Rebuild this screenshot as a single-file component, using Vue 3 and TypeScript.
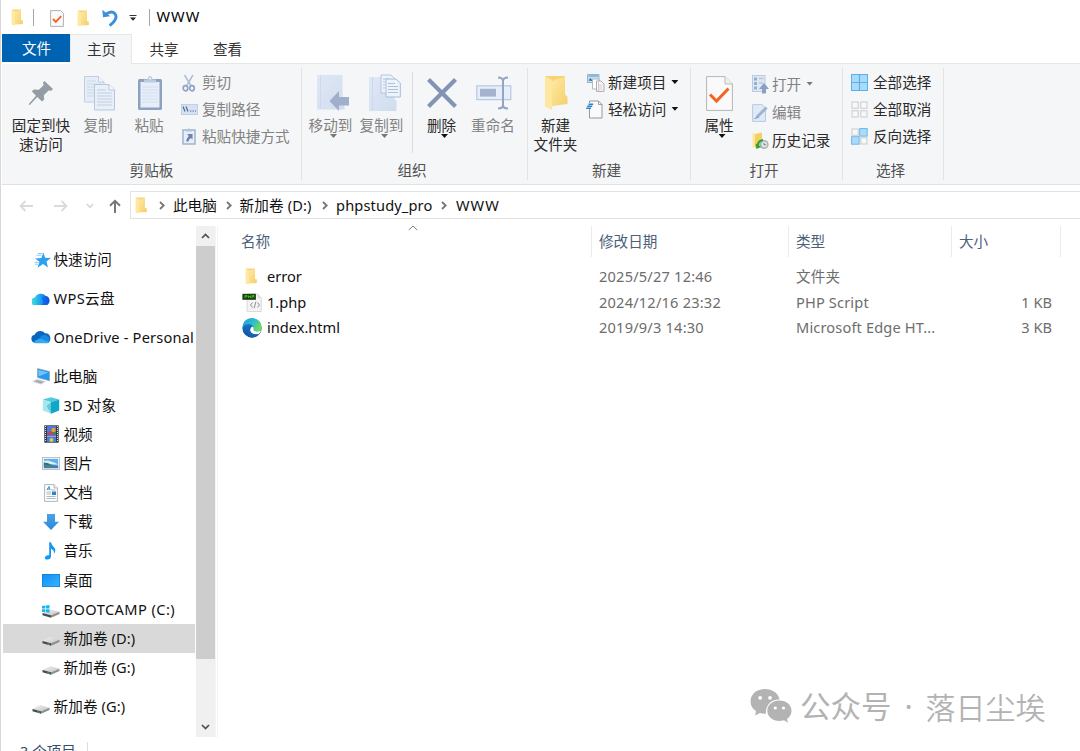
<script setup lang="ts">
interface SmallItem { icon: string; text: string; off?: boolean; arrow?: boolean }
interface NavItem { icon: string; text: string; sub?: boolean; gap?: boolean; active?: boolean }
interface FileRow { icon: string; name: string; date: string; type: string; size: string }

const clipItems: SmallItem[] = [
  { icon: 'cut', text: '剪切', off: true },
  { icon: 'path', text: '复制路径', off: true },
  { icon: 'shortcut', text: '粘贴快捷方式', off: true },
]
const newItems: SmallItem[] = [
  { icon: 'newitem', text: '新建项目', arrow: true },
  { icon: 'easy', text: '轻松访问', arrow: true },
]
const openItems: SmallItem[] = [
  { icon: 'open', text: '打开', off: true, arrow: true },
  { icon: 'edit', text: '编辑', off: true },
  { icon: 'history', text: '历史记录' },
]
const selectItems: SmallItem[] = [
  { icon: 'selall', text: '全部选择' },
  { icon: 'selnone', text: '全部取消' },
  { icon: 'selinv', text: '反向选择' },
]
const nav: NavItem[] = [
  { icon: 'star', text: '快速访问' },
  { icon: 'wps', text: 'WPS云盘', gap: true },
  { icon: 'onedrive', text: 'OneDrive - Personal', gap: true },
  { icon: 'pc', text: '此电脑', gap: true },
  { icon: 'cube', text: '3D 对象', sub: true },
  { icon: 'video', text: '视频', sub: true },
  { icon: 'picture', text: '图片', sub: true },
  { icon: 'doc', text: '文档', sub: true },
  { icon: 'download', text: '下载', sub: true },
  { icon: 'music', text: '音乐', sub: true },
  { icon: 'desktop', text: '桌面', sub: true },
  { icon: 'windrive', text: 'BOOTCAMP (C:)', sub: true },
  { icon: 'drive', text: '新加卷 (D:)', sub: true, active: true },
  { icon: 'drive', text: '新加卷 (G:)', sub: true },
  { icon: 'drive', text: '新加卷 (G:)', gap: true },
]
const crumbs = ['此电脑', '新加卷 (D:)', 'phpstudy_pro', 'WWW']
const files: FileRow[] = [
  { icon: 'folder', name: 'error', date: '2025/5/27 12:46', type: '文件夹', size: '' },
  { icon: 'php', name: '1.php', date: '2024/12/16 23:32', type: 'PHP Script', size: '1 KB' },
  { icon: 'edge', name: 'index.html', date: '2019/9/3 14:30', type: 'Microsoft Edge HT...', size: '3 KB' },
]
</script>

<template>
  <div class="window">
    <svg class="sprites" width="0" height="0" aria-hidden="true">
      <defs>
        <linearGradient id="gFold" x1="0" y1="0" x2="1" y2="1"><stop offset="0" stop-color="#ffe9a6" /><stop offset="1" stop-color="#f5cf68" /></linearGradient>
        <linearGradient id="gBlue" x1="0" y1="0" x2="1" y2="1"><stop offset="0" stop-color="#dfe8f5" /><stop offset="1" stop-color="#d0dcee" /></linearGradient>
        <linearGradient id="gArrow" x1="0" y1="0" x2="0" y2="1"><stop offset="0" stop-color="#4ba3e8" /><stop offset="1" stop-color="#2b87d8" /></linearGradient>
        <linearGradient id="gSky" x1="0" y1="0" x2="1" y2="1"><stop offset="0" stop-color="#0d8ef5" /><stop offset="1" stop-color="#3fb4ff" /></linearGradient>
        <linearGradient id="gWps" x1="0" y1="0" x2="1" y2="0"><stop offset="0" stop-color="#45e0d0" /><stop offset=".45" stop-color="#1fa8f4" /><stop offset="1" stop-color="#0a4fe0" /></linearGradient>
        <linearGradient id="gDrive" x1="0" y1="0" x2="1" y2="1"><stop offset="0" stop-color="#f1f1f1" /><stop offset="1" stop-color="#c4c4c4" /></linearGradient>
        <linearGradient id="gEdgeA" x1="0" y1="0" x2="1" y2=".5"><stop offset="0" stop-color="#1e9bdc" /><stop offset=".55" stop-color="#2bbbd0" /><stop offset="1" stop-color="#6ade55" /></linearGradient>
        <linearGradient id="gEdgeB" x1="0" y1="0" x2="0" y2="1"><stop offset="0" stop-color="#1b87d8" /><stop offset="1" stop-color="#114a9c" /></linearGradient>
      </defs>
      <symbol id="i-folder" viewBox="0 0 12 17">
        <path d="M1 .5H10V11.3H11.6V14.6Q11.6 15.3 10.8 15.3H4L1 16V.5Z" fill="#f5d47a" />
        <path d="M.6.5L4.4 2.6V16.6L.6 15.2Z" fill="#ffe8a2" />
        <path d="M4.4 2.4L10 1V11.5H11.6V15H4.4Z" fill="url(#gFold)" />
      </symbol>
      <symbol id="i-bigfolder" viewBox="0 0 26 36">
        <path d="M2 1H22V19.5L24 22V28L9 31V34.5L2 31Z" fill="#f5d376" />
        <path d="M9 6L22 1.5V19.5L24.5 22V29L9 31Z" fill="url(#gFold)" />
        <path d="M2 1L9 5V35L3.4 32Q2 31 2 29.5Z" fill="#ffe7a0" />
      </symbol>
      <symbol id="i-check" viewBox="0 0 14 17">
        <path d="M.6.6H10.6L13.4 3.4V16.4H.6Z" fill="#fafafa" stroke="#b0b0b0" />
        <path d="M3 9L5.800 11.900L11.200 6.200" fill="none" stroke="#f2641e" stroke-width="1.800" />
      </symbol>
      <symbol id="i-undo" viewBox="0 0 16 18">
        <path d="M4 5.200Q9.500 1 13 4.800Q16.600 9.500 7.600 16.600" fill="none" stroke="#3b8fdb" stroke-width="2.900" />
        <path d="M.3.8L1 8.200L8.200 7.300Z" fill="#3b8fdb" />
      </symbol>
      <symbol id="i-pin" viewBox="0 0 26 26">
        <path d="M16.500 1L25 9L23.200 10.800L20.600 10.400L15.800 15.200L16.200 19.500L14 21.600L9.300 17L2 24.800L.8 25L1.200 23.500L8 15.700L3.800 11.300L5.800 9.400L10.800 9.700L15.600 5.200L15 2.500Z" fill="#949ca5" />
      </symbol>
      <symbol id="i-copy" viewBox="0 0 31 35">
        <path d="M.5.500H14.500L20 6V26H.5Z" fill="#e5edf7" stroke="#bfcee2" />
        <path d="M14.500.500V6H20" fill="#f4f8fc" stroke="#bfcee2" />
        <path d="M3 5H12M3 8H17M3 11H17M3 14H17M3 17H17M3 20H17" stroke="#cbd8e9" />
        <path d="M10.500 8.500H25L30.500 14V34H10.500Z" fill="#e8eff8" stroke="#b6c7dd" />
        <path d="M25 8.500V14H30.500" fill="#f6f9fd" stroke="#b6c7dd" />
        <path d="M13 14H22M13 17H28M13 20H28M13 23H28M13 26H28M13 29H28" stroke="#c1cfe2" />
      </symbol>
      <symbol id="i-paste" viewBox="0 0 26 36">
        <rect x="1" y="4" width="24" height="31" rx="1.500" fill="#8da1c0" />
        <rect x="3.500" y="7" width="19" height="25.500" fill="#e6eef9" />
        <path d="M5 12H21M5 15H21M5 18H21M5 21H21M5 24H21M5 27H21" stroke="#d3dfef" />
        <path d="M7 7.500V4.500H10.500Q11 1 13 1T15.500 4.500H19V7.500Z" fill="#bccbe0" />
        <circle cx="13" cy="3.500" r="1" fill="#f5f6f7" />
      </symbol>
      <symbol id="i-cut" viewBox="0 0 16 18">
        <path d="M3.500 1L10.200 12M12 1L5.500 12" stroke="#b1c0d8" stroke-width="1.600" fill="none" />
        <ellipse cx="4.500" cy="14.200" rx="2.300" ry="2.600" fill="none" stroke="#91a3c1" stroke-width="1.700" />
        <ellipse cx="11" cy="14.200" rx="2.300" ry="2.600" fill="none" stroke="#91a3c1" stroke-width="1.700" />
      </symbol>
      <symbol id="i-path" viewBox="0 0 17 11">
        <rect x=".4" y=".4" width="16.200" height="10.200" fill="#d5e2f4" stroke="#b9cae2" stroke-width=".8" />
        <path d="M2 2.500L4 7.500M5 2.500L7 7.500" stroke="#4a5f8a" stroke-width="1.100" /><path d="M9 7H10.300M11.500 7H12.800M14 7H15" stroke="#4a5f8a" stroke-width="1.200" />
      </symbol>
      <symbol id="i-shortcut" viewBox="0 0 14 18">
        <rect x="1" y="3" width="12" height="14" fill="#e6eef9" stroke="#9cafca" stroke-width="1.400" />
        <path d="M4 4.500V2.500H6L7 .8L8 2.500H10V4.500Z" fill="#b0c1d9" />
        <path d="M5 7H10.500V12.500L8.800 10.900Q6.800 12 6.500 14.500H4.300Q4.300 11.500 6.800 9Z" fill="#6c82aa" />
      </symbol>
      <symbol id="i-move" viewBox="0 0 34 38">
        <path d="M1 1H26.500V23L28.500 26V35.500H1Z" fill="url(#gBlue)" /><path d="M4.500 1V35" stroke="#cad7ea" stroke-width=".8" />
        <path d="M13.500 27L23 17V23H33V31.500H23V37Z" fill="#a0afcb" />
      </symbol>
      <symbol id="i-copyto" viewBox="0 0 33 38">
        <path d="M1 3H26V24L28.500 27V37H1Z" fill="url(#gBlue)" /><path d="M4.500 3V36.500" stroke="#cad7ea" stroke-width=".8" />
        <path d="M13 1H23L27 5V19H13Z" fill="#edf3fa" stroke="#b4c5dc" />
        <path d="M15 5H22M15 8H17M15 11H17M15 14H17" stroke="#b4c5dc" />
        <path d="M18 5H28L32.300 9V23H18Z" fill="#edf3fa" stroke="#a9bcd7" />
        <path d="M20 9.500H27M20 12.500H30M20 15.500H30M20 18.500H30" stroke="#afc1da" />
      </symbol>
      <symbol id="i-delete" viewBox="0 0 32 32"><path d="M2.500 2.500L29.500 29.500M29.500 2.500L2.500 29.500" stroke="#8293b5" stroke-width="4.200" /></symbol>
      <symbol id="i-rename" viewBox="0 0 36 34">
        <rect x=".8" y="9.800" width="34" height="13.800" fill="#e6eefa" stroke="#b7c9e1" stroke-width="1.200" />
        <rect x="4" y="12.800" width="16" height="7.800" fill="#a3b3cf" />
        <path d="M22 1.500Q26.500 1.500 27 4.500Q27.500 1.500 32 1.500M27 4V30M22 32.500Q26.500 32.500 27 29.500Q27.500 32.500 32 32.500" fill="none" stroke="#94a5c3" stroke-width="2" />
      </symbol>
      <symbol id="i-newitem" viewBox="0 0 18 18">
        <rect x=".6" y=".6" width="11.400" height="8" fill="#c5e0f4" stroke="#8fa2b3" stroke-width=".8" /><path d="M1.500 2H11" stroke="#5aa3d5" stroke-width="1.200" /><path d="M1.500 6.500L3.500 4L5.500 7" fill="#2d6a96" />
        <path d="M5.500 5H10.500L12.500 7V15H5.500Z" fill="#fff" stroke="#a2adb7" stroke-width=".8" />
        <path d="M9.500 7H14L17 10V17.400H9.500Z" fill="#fafafa" stroke="#999" stroke-width=".8" /><path d="M11.500 8V17" stroke="#eaa2ab" stroke-width=".7" /><path d="M12 11H15.500M12 13H15.500M12 15H15.500" stroke="#b4c8df" stroke-width=".8" />
      </symbol>
      <symbol id="i-easy" viewBox="0 0 18 19">
        <path d="M3.500 1H12.500L16 4.500V18H3.500Z" fill="#fafafa" stroke="#8d8d8d" stroke-width=".9" /><path d="M12.500 1V4.500H16" fill="none" stroke="#8d8d8d" stroke-width=".8" />
        <rect x="2" y="3" width="3.500" height="6" fill="#f5f6f7" /><path d="M2.500 4.200H7.200M1.200 6.200H6.200M.2 8.200H5" stroke="#2b86cf" stroke-width="1.400" />
      </symbol>
      <symbol id="i-props" viewBox="0 0 27 35">
        <path d="M.6.600H19L26.400 8V34.400H.6Z" fill="#fafafa" stroke="#b5b5b5" /><path d="M19 .6V8H26.400" fill="#efefef" stroke="#bdbdbd" />
        <path d="M4 18.500L10.500 25L22.500 12.500" fill="none" stroke="#f26522" stroke-width="3" />
      </symbol>
      <symbol id="i-open" viewBox="0 0 17 19">
        <rect x=".5" y=".5" width="12.500" height="16" fill="#dde8f6" stroke="#bccbe0" /><rect x="2" y="2.500" width="3" height="3" fill="#9aadc9" /><rect x="2" y="7" width="3" height="3" fill="#9aadc9" /><rect x="2" y="11.500" width="3" height="3" fill="#9aadc9" />
        <path d="M7 3.500H11.500M7 8H11" stroke="#b7c6dc" stroke-width="1.500" /><path d="M7 14L12 8L17 14H14V18.600H10V14Z" fill="#8d9fc0" />
      </symbol>
      <symbol id="i-edit" viewBox="0 0 16 18">
        <path d="M.6.600H10L13.500 4V17.400H.6Z" fill="#dfe9f7" stroke="#b9c9e0" /><path d="M3.500 14.500L4.500 11.500L13.500 2.500L15.600 4.500L6.500 13.500Z" fill="#a0b2ce" /><path d="M2.500 14.800L7 12.800" stroke="#8d9fbe" stroke-width="1.200" />
      </symbol>
      <symbol id="i-history" viewBox="0 0 17 18">
        <path d="M.5.800L3.500 2V16.500L.5 15Z" fill="#ffe79b" /><path d="M3 2L10 .5V15.500H3Z" fill="#f4cf63" />
        <circle cx="12" cy="12.500" r="4.600" fill="#a9b3b3" /><circle cx="12.300" cy="12.500" r="2.900" fill="#dde3e2" /><path d="M12 11V12.700H14" stroke="#5f6c75" fill="none" stroke-width=".8" />
        <path d="M5.600 14Q6 8.600 11 8" fill="none" stroke="#25a33c" stroke-width="2" /><path d="M3.500 11.500L9 15L4.500 17Z" fill="#25a33c" />
      </symbol>
      <symbol id="i-selall" viewBox="0 0 17 17">
        <rect x=".5" y=".5" width="16" height="16" fill="#a9dcfb" stroke="#5cb0ea" /><path d="M8.500.500V16.500M.5 8.500H16.500" stroke="#5cb0ea" stroke-width="1.200" />
      </symbol>
      <symbol id="i-selnone" viewBox="0 0 17 17">
        <g fill="#f8f8f8" stroke="#cbcbcb"><rect x="1" y="1" width="6.200" height="6.200" /><rect x="9.800" y="1" width="6.200" height="6.200" /><rect x="1" y="9.800" width="6.200" height="6.200" /><rect x="9.800" y="9.800" width="6.200" height="6.200" /></g>
      </symbol>
      <symbol id="i-selinv" viewBox="0 0 17 17">
        <g fill="#f8f8f8" stroke="#c9c9c9"><rect x="1" y="1" width="6.200" height="6.200" /><rect x="9.800" y="9.800" width="6.200" height="6.200" /></g>
        <g fill="#a9dcfb" stroke="#6cb8ec"><rect x="8.700" y=".6" width="7.500" height="7.500" /><rect x=".6" y="8.700" width="7.500" height="7.500" /></g>
      </symbol>
      <symbol id="i-star" viewBox="0 0 18 18">
        <path d="M10 1.500L11.500 6.800L17.500 7L13 10.500L14.500 16.500L9.500 13L4 16.800L6 10.800L1.500 7.500L7.800 7Z" fill="#2da0f2" /><path d="M3 4.200H8M4.500 2.500H9M1.500 13.200H4.500M1 11.300H5.500" stroke="#7cc6f7" stroke-width=".9" />
      </symbol>
      <symbol id="i-wps" viewBox="0 0 18 13.500">
        <path d="M4 13.500A4 4 0 0 1 3 5.500A6.300 6.300 0 0 1 13.500 3.800A5 5 0 0 1 14 13.500Z" fill="url(#gWps)" /><path d="M9.500 6Q12.500 3.500 16 5.500Q19.500 11 14 13.500H9Q13 11 9.500 6Z" fill="#0c55e4" opacity=".55" />
      </symbol>
      <symbol id="i-onedrive" viewBox="0 0 20 14">
        <path d="M4.300 13A4.200 4.200 0 0 1 3.700 4.700A6 6 0 0 1 14 3.300A5 5 0 0 1 16 13Z" fill="#0a66bd" /><path d="M3.500 12.500L11 5.500Q15.500 4 17 6.500A3.600 3.600 0 0 1 16 13H4.500Z" fill="#1688df" /><path d="M2.500 12.400Q5 9 10.500 9L18.500 12.200Q17.500 13.200 16 13.200H4.500Z" fill="#35aaf0" />
      </symbol>
      <symbol id="i-pc" viewBox="0 0 18 17">
        <path d="M5.500 .6L17.500 3.500V12.800L5.500 9.500Z" fill="#2399f0" stroke="#8fa0ac" stroke-width=".7" /><path d="M6.300 2L16.500 4.500L6.500 8.500Z" fill="#71c4fb" /><path d="M0 13.500L5 11L14 13.500L9 16.600Z" fill="#cfd5d9" /><path d="M2 13.500L5 12L12 13.700L9 15.500Z" fill="#a3adb4" />
      </symbol>
      <symbol id="i-cube" viewBox="0 0 18 17">
        <path d="M.8 2.500L9 .3L17.200 2.500L9 5.200Z" fill="#53c8e0" /><path d="M.8 2.500L9 5.200V16.700L.8 13.500Z" fill="#a8e8ec" /><path d="M17.200 2.500L9 5.200V16.700L17.200 13.500Z" fill="#0ea6c9" /><path d="M9 5.200L4.500 9L9 16.500Z" fill="#62cbd8" />
      </symbol>
      <symbol id="i-video" viewBox="0 0 15 18">
        <rect x=".3" y=".3" width="14.400" height="17.400" fill="#303841" /><rect x="3" y="1" width="9" height="16" fill="#4c78d8" /><path d="M1.500 1V17M13.500 1V17" stroke="#d7dcdf" stroke-width="1.100" stroke-dasharray="1 1" /><path d="M3 8L6 6L12 8V10H3Z" fill="#b9485f" /><circle cx="9.500" cy="5" r="2.200" fill="#ef9e24" /><path d="M8 9H12V7H10Z" fill="#1f944d" /><circle cx="7.500" cy="15" r="2" fill="#d7cd42" /><path d="M3 11.500H12" stroke="#7da9ff" />
      </symbol>
      <symbol id="i-picture" viewBox="0 0 18 13">
        <rect x=".4" y=".4" width="17.200" height="12.200" fill="#fff" stroke="#b5b5b5" stroke-width=".8" /><rect x="1.800" y="1.800" width="14.400" height="9.400" fill="#5fb2ee" /><path d="M1.800 4Q6 3 9 4.500Q12 5 16.200 7.500H1.800Z" fill="#d9effb" /><path d="M1.800 5.500Q6 5.500 9 7.500L15 8.800H1.800Z" fill="#3b785a" /><path d="M1.800 8.800H16.200V11.200H1.800Z" fill="#477eaf" />
      </symbol>
      <symbol id="i-doc" viewBox="0 0 14 18">
        <path d="M.6.600H10L13.400 4V17.400H.6Z" fill="#fff" stroke="#a2a2a2" stroke-width=".8" /><path d="M10 .6V4H13.400" fill="#eee" stroke="#a2a2a2" stroke-width=".7" /><path d="M3 6L5 2.500L6 6M3 5H6" stroke="#3194d3" stroke-width="1" fill="none" /><path d="M2.500 8H7M2.500 10H7M2.500 12.500H11.500M2.500 14.500H11.500M7 6H11.500" stroke="#9fb1c0" stroke-width=".9" /><rect x="8" y="7.500" width="4" height="3.500" fill="#3083c7" />
      </symbol>
      <symbol id="i-download" viewBox="0 0 16 16"><path d="M4 0H12V7.700H16L8 16L0 7.700H4Z" fill="url(#gArrow)" /></symbol>
      <symbol id="i-music" viewBox="0 0 14 18">
        <path d="M6.200.3H8Q8.600 3.200 11 5.300Q13.800 8.500 10.800 12Q11.800 8.300 8 6.800V14.500Q7.800 17.300 4.500 17.600Q1.500 17.600 1.800 15.200Q2.800 12.800 6.200 13.200Z" fill="#1598f3" />
      </symbol>
      <symbol id="i-desktop" viewBox="0 0 18 13"><rect width="18" height="13" fill="url(#gSky)" /><rect x=".4" y=".4" width="17.200" height="12.200" fill="none" stroke="#1583d8" stroke-width=".8" /></symbol>
      <symbol id="i-drive" viewBox="0 0 18 10">
        <path d="M.5 5L8.500 1L17.500 3.700L9 7.300Z" fill="url(#gDrive)" /><path d="M.5 5L9 7.300V9.800L.5 7.300Z" fill="#454b4b" /><path d="M9 7.300L17.500 3.700V6L9 9.800Z" fill="#8d8f8f" /><path d="M5.500 7.800L7.500 8.300" stroke="#51d461" stroke-width="1" />
      </symbol>
      <symbol id="i-windrive" viewBox="0 0 18 13">
        <path d="M.5 8L8.500 4.500L17.500 6.700L9 10.300Z" fill="url(#gDrive)" /><path d="M.5 8L9 10.300V12.800L.5 10.300Z" fill="#454b4b" /><path d="M9 10.300L17.500 6.700V9L9 12.800Z" fill="#8d8f8f" /><path d="M0 1L3.100.600V3.600H0ZM3.700.500L7.500 0V3.600H3.700ZM0 4.200H3.100V7.200L0 6.800ZM3.700 4.200H7.500V7.800L3.700 7.300Z" fill="#14b5f1" />
      </symbol>
      <symbol id="i-network" viewBox="0 0 18 17">
        <path d="M5.500 .6L17.500 3.500V12.800L5.500 9.500Z" fill="#2399f0" /><circle cx="5" cy="12" r="4.500" fill="#2aa6d8" />
      </symbol>
      <symbol id="i-php" viewBox="0 0 20 19">
        <path d="M5 1H15.500L19.300 5V18.500H5Z" fill="#f4f4f4" stroke="#d2d2d2" stroke-width=".8" /><path d="M15.500 1V5H19.300" fill="#ddd" /><rect x=".4" y=".8" width="13.500" height="6" fill="#14430f" /><path d="M3 5V2.500H5V3.800H3M6.500 5V2.500M6.500 3.700H8.500M8.500 2.500V5M10 5V2.500H12V3.800H10" fill="none" stroke="#67cb27" stroke-width=".7" /><path d="M10.500 9.500L8.500 12L10.500 14.500M15.500 9.500L17.500 12L15.500 14.500M13.800 8.800L12.200 15.200" fill="none" stroke="#858585" stroke-width=".9" />
      </symbol>
      <symbol id="i-edge" viewBox="0 0 20 20">
        <circle cx="10" cy="10" r="9.700" fill="url(#gEdgeB)" /><path d="M.5 9.200Q1.500 .3 10 .3T19.700 9Q19.500 13.500 15 13.500Q11 13.500 11.800 11Q12.600 8.500 9.500 6.800Q4.500 4.500 .5 9.200Z" fill="url(#gEdgeA)" /><path d="M11.700 10.500Q10.600 13.200 14.800 13.600Q17.500 13.500 18.900 12.200Q18.700 15.300 15.500 16.300Q8.500 17 8 12Q8.200 9 10.500 8.500Q12 9.300 11.700 10.500Z" fill="#fff" /><path d="M8 12Q8.500 16.600 15.500 16.300Q13 19.700 9.500 19.500Q5 17 6 12Q6.500 9 10 8.300Q8 9.500 8 12Z" fill="#1565b7" />
      </symbol>
    </svg>

    <svg class="edge-marks" width="1" height="751" viewBox="0 0 1 751">
      <path d="M.5 210V212" stroke="#8fc0dc" /><path d="M.5 356V359" stroke="#c2272d" /><path d="M.5 227V228M.5 397V398" stroke="#aaa" /><path d="M.5 470V471" stroke="#444" /><path d="M.5 489V490" stroke="#777" />
    </svg>

    <header class="titlebar">
      <svg class="ic t-folder"><use href="#i-folder" /></svg>
      <i class="vbar" />
      <svg class="ic t-check"><use href="#i-check" /></svg>
      <svg class="ic t-folder2"><use href="#i-folder" /></svg>
      <svg class="ic t-undo"><use href="#i-undo" /></svg>
      <svg class="t-drop" viewBox="0 0 8 6"><path d="M.5.500H7.500" stroke="#333" /><path d="M1 2.500H7L4 5.800Z" fill="#222" /></svg>
      <i class="vbar" />
      <span class="title">WWW</span>
    </header>

    <nav class="tabs">
      <span class="tab file">文件</span>
      <span class="tab current">主页</span>
      <span class="tab">共享</span>
      <span class="tab">查看</span>
    </nav>

    <section class="ribbon">
      <div class="group g1">
        <div class="tools">
          <div class="big pinb"><span class="pic"><svg width="26" height="26"><use href="#i-pin" /></svg></span><span>固定到快<br>速访问</span></div>
          <div class="big copyb off"><span class="pic"><svg width="31" height="35"><use href="#i-copy" /></svg></span><span>复制</span></div>
          <div class="big pasteb off"><span class="pic"><svg width="26" height="36"><use href="#i-paste" /></svg></span><span>粘贴</span></div>
          <div class="smalls">
            <div v-for="s in clipItems" :key="s.text" class="small" :class="{ off: s.off }"><span class="sic"><svg :class="'s-' + s.icon"><use :href="'#i-' + s.icon" /></svg></span>{{ s.text }}</div>
          </div>
        </div>
        <div class="caption">剪贴板</div>
      </div>
      <div class="group g2">
        <div class="tools">
          <div class="big moveb off"><span class="pic"><svg width="34" height="38"><use href="#i-move" /></svg></span><span>移动到</span><i class="tri" /></div>
          <div class="big moveb off"><span class="pic"><svg width="33" height="38"><use href="#i-copyto" /></svg></span><span>复制到</span><i class="tri" /></div>
          <i class="divider" />
          <div class="big delb"><span class="pic"><svg width="32" height="32"><use href="#i-delete" /></svg></span><span>删除</span><i class="tri" /></div>
          <div class="big renb off"><span class="pic"><svg width="36" height="34"><use href="#i-rename" /></svg></span><span>重命名</span></div>
        </div>
        <div class="caption">组织</div>
      </div>
      <div class="group g3">
        <div class="tools">
          <div class="big newb"><span class="pic"><svg width="26" height="36"><use href="#i-bigfolder" /></svg></span><span>新建<br>文件夹</span></div>
          <div class="smalls">
            <div v-for="s in newItems" :key="s.text" class="small"><span class="sic"><svg :class="'s-' + s.icon"><use :href="'#i-' + s.icon" /></svg></span>{{ s.text }}<i class="tri" /></div>
          </div>
        </div>
        <div class="caption">新建</div>
      </div>
      <div class="group g4">
        <div class="tools">
          <div class="big propb"><span class="pic"><svg width="27" height="35"><use href="#i-props" /></svg></span><span>属性</span><i class="tri" /></div>
          <div class="smalls">
            <div v-for="s in openItems" :key="s.text" class="small" :class="{ off: s.off }"><span class="sic"><svg :class="'s-' + s.icon"><use :href="'#i-' + s.icon" /></svg></span>{{ s.text }}<i v-if="s.arrow" class="tri" /></div>
          </div>
        </div>
        <div class="caption">打开</div>
      </div>
      <div class="group g5">
        <div class="tools">
          <div class="smalls">
            <div v-for="s in selectItems" :key="s.text" class="small"><span class="sic"><svg width="17" height="17"><use :href="'#i-' + s.icon" /></svg></span>{{ s.text }}</div>
          </div>
        </div>
        <div class="caption">选择</div>
      </div>
    </section>

    <section class="addressrow">
      <div class="history">
        <svg width="14" height="12" viewBox="0 0 14 12"><path d="M14 6H1.500M6.500 1L1.500 6L6.500 11" fill="none" stroke="#dadada" stroke-width="1.800" /></svg>
        <svg class="fwd" width="14" height="12" viewBox="0 0 14 12"><path d="M0 6H12.500M7.500 1L12.500 6L7.500 11" fill="none" stroke="#dadada" stroke-width="1.800" /></svg>
        <svg class="rec" width="8" height="6" viewBox="0 0 8 6"><path d="M.8 1L4 4.300L7.200 1" fill="none" stroke="#d5d5d5" stroke-width="1.500" /></svg>
        <svg class="up" width="12" height="14" viewBox="0 0 12 14"><path d="M6 14V1.800M1 6.800L6 1.800L11 6.800" fill="none" stroke="#777" stroke-width="2" /></svg>
      </div>
      <div class="address">
        <svg class="a-folder"><use href="#i-folder" /></svg>
        <template v-for="(c, i) in crumbs" :key="c">
          <svg class="chev" viewBox="0 0 6 9"><path d="M1 1L4.700 4.500L1 8" fill="none" stroke="#777" stroke-width="1.900" /></svg>
          <span class="crumb" :class="'c' + i">{{ c }}</span>
        </template>
      </div>
    </section>

    <main class="body">
      <aside class="nav">
        <div v-for="(n, i) in nav" :key="i" class="nitem" :class="{ sub: n.sub, gap: n.gap, active: n.active }">
          <span class="nic"><svg :class="'n-' + n.icon"><use :href="'#i-' + n.icon" /></svg></span>
          <span class="ntext" :class="'nt-' + n.icon">{{ n.text }}</span>
        </div>
        <div class="nitem gap"><span class="nic"><svg class="n-pc"><use href="#i-network" /></svg></span></div>
      </aside>
      <div class="scroll">
        <div class="sbtn"><svg width="9" height="6" viewBox="0 0 9 6"><path d="M1 5L4.500 1.400L8 5" fill="none" stroke="#505050" stroke-width="1.700" /></svg></div>
        <div class="thumb" />
        <div class="sbtn last"><svg width="9" height="6" viewBox="0 0 9 6"><path d="M1 1L4.500 4.600L8 1" fill="none" stroke="#505050" stroke-width="1.700" /></svg></div>
      </div>
      <div class="content">
        <div class="row head">
          <span class="cell name">名称<svg class="sort" width="10" height="6" viewBox="0 0 10 6"><path d="M.8 5L5 1L9.200 5" fill="none" stroke="#7c7c7c" /></svg></span>
          <span class="cell date">修改日期</span>
          <span class="cell type">类型</span>
          <span class="cell size">大小</span>
        </div>
        <div v-for="f in files" :key="f.name" class="row">
          <span class="cell name"><span class="fic"><svg :class="'f-' + f.icon"><use :href="'#i-' + f.icon" /></svg></span>{{ f.name }}</span>
          <span class="cell date">{{ f.date }}</span>
          <span class="cell type">{{ f.type }}</span>
          <span class="cell size">{{ f.size }}</span>
        </div>
      </div>
    </main>

    <footer class="status"><span>3 个项目</span></footer>

    <div class="mark">
      <svg width="42" height="36" viewBox="0 0 42 36">
        <path d="M15 1C6.500 1 .5 6.500 .5 13.500C.5 17.500 2.500 20.800 6 23L5.200 27.500L10 25Q13 26 16 25.500A12.500 12.500 0 0 1 29.500 11.500C28.500 5.500 22.500 1 15 1Z" fill="#b3b3b3" />
        <path d="M29.500 12.500C22.500 12.500 17.300 17 17.300 22.800S22.500 33 29.500 33Q31.800 33 34 32.300L38 34.800L37 31Q41.500 27.800 41.500 22.800C41.500 17 36.500 12.500 29.500 12.500Z" fill="#b3b3b3" />
        <g fill="#fff"><circle cx="10.200" cy="9.800" r="1.900" /><circle cx="20" cy="9.800" r="1.900" /><circle cx="25.300" cy="20" r="1.600" /><circle cx="33.500" cy="20" r="1.600" /></g>
      </svg>
      <span class="m1">公众号</span><span class="dot">·</span><span class="m2">落日尘埃</span>
    </div>
  </div>
</template>

<style>
html, body { margin: 0; overflow: hidden; background: #fff; }
</style>

<style scoped>
.window {
  position: relative; box-sizing: border-box; width: 1080px; height: 751px; overflow: hidden;
  border-left: 1px solid #d8d8d8; padding-left: 1px; background: #fff;
  display: flex; flex-direction: column;
  font-family: "Noto Sans", "Noto Sans CJK SC", sans-serif; font-size: 14.6px; color: #2a2a2a; line-height: 19px; white-space: nowrap;
}
.sprites { position: absolute; }
.edge-marks { position: absolute; left: -1px; top: 0; }
svg { display: block; flex: none; }
i { display: block; flex: none; }
.titlebar { height: 34px; flex: none; display: flex; align-items: center; box-sizing: border-box; padding-left: 9px; color: #000; }
.t-folder, .t-folder2 { width: 12px; height: 17px; }
.t-folder2 { margin-left: 13px; margin-top: 2px; }
.vbar { width: 1px; height: 17px; background: #a5a5a5; margin-left: 10px; }
.t-check { width: 14px; height: 17px; margin-left: 16px; margin-top: 2px; }
.t-undo { width: 16px; height: 18px; margin-left: 13px; margin-top: 2px; }
.t-drop { width: 8px; height: 6px; margin-left: 11px; margin-top: 1px; }
.title { margin: -2px 0 0 6.500px; letter-spacing: 1px; }
.t-drop + .vbar { margin-left: 12px; }

.tabs { height: 30px; flex: none; display: flex; color: #333; }
.tab { width: 63px; text-align: center; line-height: 30px; border-bottom: 1px solid #e6e7e8; box-sizing: border-box; height: 30px; padding-left: 1px; }
.tab.file { width: 69px; height: 28px; line-height: 29px; background: #0063b1; color: #fff; border: 0; border-right: 1px solid #e6e7e8; }
.tab.current { width: 61px; background: #f5f6f7; border: 1px solid #e6e7e8; border-width: 1px 1px 0 0; line-height: 29px; }
.tab:last-child { flex: 1; text-align: left; padding-left: 18px; }

.ribbon { height: 121px; flex: none; box-sizing: border-box; background: #f5f6f7; border-bottom: 1px solid #dfe0e1; display: flex; }
.group { box-sizing: border-box; display: flex; flex-direction: column; border-right: 1px solid #e2e3e4; margin: 4px 0; }
.g1 { width: 300px; } .g2 { width: 226px; } .g3 { width: 163px; } .g4 { width: 152px; } .g5 { width: 101px; }
.tools { height: 95px; display: flex; align-items: flex-start; }
.g1 .tools { padding-left: 7px; } .g2 .tools { padding-left: 3px; } .g3 .tools { padding-left: 2px; } .g4 .tools { padding-left: 3px; } .g5 .tools { padding-left: 8px; }
.caption { text-align: center; padding-right: 5px; color: #505050; }
.g1 .caption { padding-right: 0; }
.big { display: flex; flex-direction: column; align-items: center; text-align: center; }
.pic { height: 38px; margin: 6px 0 4px; display: flex; align-items: center; justify-content: center; }
.copyb .pic, .renb .pic, .pasteb .pic { padding-left: 2px; }
.moveb .pic { padding-left: 5px; }
.pinb { width: 64px; } .copyb { width: 50px; } .pasteb { width: 52px; } .moveb { width: 51px; } .delb { width: 57px; } .renb { width: 46px; } .newb { width: 51px; } .propb { width: 50px; }
.off { color: #828282; }
.tri { width: 7px; height: 4px; background: #111; clip-path: polygon(0 0, 100% 0, 50% 100%); }
.big .tri { margin: -1px 0 0 6px; }
.off .tri { background: #777; }
.divider { width: 1px; height: 81px; margin: 4px 0 0 5px; background: #dcdddf; }
.smalls { display: flex; flex-direction: column; padding-top: 1.600px; }
.g1 .smalls, .g3 .smalls { margin-left: 6px; } .g4 .smalls { margin-left: 8px; padding-top: 2.500px; }
.small { height: 26.700px; display: flex; align-items: center; }
.g4 .small { height: 28px; }
.sic { width: 21px; display: flex; }
.g4 .sic { width: 20px; } .g5 .sic { width: 22px; }
.small .tri { margin-left: 5px; margin-bottom: 2px; }
.s-cut { width: 16px; height: 18px; } .s-path { width: 17px; height: 11px; } .s-shortcut { width: 14px; height: 18px; margin-left: 1px; }
.s-newitem { width: 18px; height: 18px; } .s-easy { width: 18px; height: 19px; margin-left: -1px; }
.s-open { width: 17px; height: 19px; } .s-edit { width: 16px; height: 18px; } .s-history { width: 17px; height: 18px; }

.addressrow { height: 41px; flex: none; display: flex; padding-top: 6px; box-sizing: border-box; }
.history { width: 128px; height: 28px; display: flex; align-items: center; padding-left: 17px; box-sizing: border-box; padding-top: 2px; }
.fwd { margin-left: 21px; } .rec { margin-left: 18px; } .up { margin-left: 15px; }
.address { flex: 1; height: 28px; border: 1px solid #e2e2e2; border-right: 0; box-sizing: border-box; display: flex; align-items: center; padding-left: 4px; color: #111; }
.a-folder { width: 12px; height: 17px; }
.chev { width: 6px; height: 9px; margin: 1px 9px 0 12px; }
.a-folder + .chev { margin: 1px 8px 0 12px; }
.crumb { flex: none; }
.c0 { width: 43px; } .c1 { width: 73px; letter-spacing: .15px; } .c2 { width: 96px; letter-spacing: .15px; } .c3 { letter-spacing: 1px; }
.c0 + .chev { margin: 1px 8px 0 9.500px; } .c1 + .chev { margin: 1px 8px 0 9.500px; } .c2 + .chev { margin: 1px 9px 0 9px; }

.body { height: 512px; flex: none; display: flex; }
.nav { width: 194px; padding-top: 19px; box-sizing: border-box; height: 511px; overflow: hidden; color: #111; }
.nitem { height: 29.150px; display: flex; align-items: center; padding-left: 29px; margin-left: 1px; width: 192px; box-sizing: border-box; }
.nitem.sub { padding-left: 39px; } .nitem.gap { margin-top: 9.700px; }
.nitem.active { background: #d9d9d9; }
.nic { width: 21.500px; flex: none; display: flex; }
.nt-onedrive { letter-spacing: .19px; } .nt-windrive { letter-spacing: .43px; } .nt-wps { letter-spacing: .4px; } .nt-drive { letter-spacing: .1px; } .nt-cube { letter-spacing: .15px; }
.n-star { width: 18px; height: 18px; transform: translateX(1.500px); } .n-wps { width: 18px; height: 13.500px; } .n-onedrive { width: 20px; height: 14px; transform: translateX(-1px); }
.n-pc { width: 18px; height: 17px; } .n-cube { width: 18px; height: 17px; }
.nic .n-video { width: 15px; height: 18px; margin-left: 2px; } .n-picture { width: 18px; height: 13px; } .nic .n-doc { width: 14px; height: 18px; margin-left: 2px; }
.nic .n-download { width: 16px; height: 16px; margin-left: 1px; } .nic .n-music { width: 14px; height: 18px; margin-left: 1px; } .n-desktop { width: 18px; height: 13px; }
.n-windrive { width: 18px; height: 13px; margin-top: 4px; } .n-drive { width: 18px; height: 10px; margin-top: 6px; }
.scroll { width: 20px; height: 511px; background: #f0f0f0; display: flex; flex-direction: column; border-right: 1px solid #f4f4f4; box-sizing: border-box; }
.sbtn { height: 20px; display: flex; align-items: center; justify-content: center; }
.sbtn.last { margin-top: auto; }
.thumb { height: 413px; background: #cdcdcd; }
.content { flex: 1; border-left: 1px solid #f4f4f4; margin-left: 1px; }
.row { display: flex; height: 25.500px; align-items: center; color: #6d6d6d; }
.row.head { height: 31px; color: #4c607a; margin-bottom: 7px; }
.head .cell { height: 31px; box-sizing: border-box; border-right: 1px solid #ebebeb; display: flex; align-items: center; }
.cell { box-sizing: border-box; flex: none; }
.name { width: 374px; padding-left: 24px; display: flex; align-items: center; color: #111; }
.head .name { padding-left: 23px; color: inherit; }
.sort { margin: -27px 0 0 138px; }
.date { width: 197px; padding-left: 7px; letter-spacing: .2px; } .type { width: 163px; padding-left: 7px; letter-spacing: .15px; } .size { width: 109px; padding: 0 9px 0 7px; text-align: right; }
.head .cell { letter-spacing: 0; }
.fic { width: 25px; display: flex; }
.f-folder { width: 12px; height: 17px; margin-left: 3px; } .f-php { width: 20px; height: 19px; } .f-edge { width: 20px; height: 20px; }

.status { flex: none; height: 28px; padding: 4px 0 0 18px; color: #35506e; }
.status span { display: inline-block; width: 67px; border-right: 1px solid #ddd; }
.mark { position: absolute; left: 749px; top: 685px; height: 42px; display: flex; align-items: center; color: #b3b3b3; font-size: 30.500px; line-height: 42px; }
.mark svg { margin-top: -1px; }
.m1 { margin-left: 8px; } .dot { width: 34px; text-align: center; }
.m2 { font-weight: 350; font-size: 30px; font-family: "Noto Sans CJK SC", sans-serif; }
</style>
